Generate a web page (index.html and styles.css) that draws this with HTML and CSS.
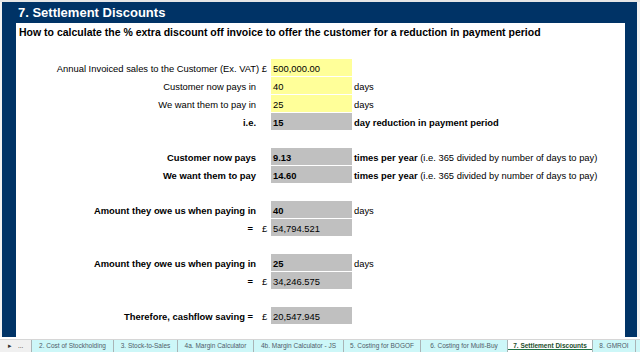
FILE: index.html
```html
<!DOCTYPE html>
<html lang="en">
<head>
  <meta charset="UTF-8" />
  <meta name="viewport" content="width=device-width, initial-scale=1.0" />
  <title>7. Settlement Discounts</title>
  <link rel="stylesheet" href="styles.css">
</head>
<body>
  <div class="gridline-top"></div>

  <div class="frame">
    <h1 class="sheet-title">7. Settlement Discounts</h1>
    <div class="sheet">
      <p class="intro">How to calculate the % extra discount off invoice to offer the customer for a reduction in payment period</p>
      <div class="row"></div>

      <div class="row">
        <span class="label wide">Annual Invoiced sales to the Customer (Ex. VAT) £</span>
        <span class="cell input">500,000.00</span>
      </div>
      <div class="row">
        <span class="label">Customer now pays in</span>
        <span class="cell input">40</span>
        <span class="unit">days</span>
      </div>
      <div class="row">
        <span class="label">We want them to pay in</span>
        <span class="cell input">25</span>
        <span class="unit">days</span>
      </div>
      <div class="row">
        <span class="label b">i.e.</span>
        <span class="cell calc b">15</span>
        <span class="unit b">day reduction in payment period</span>
      </div>
      <div class="row blank"></div>

      <div class="row">
        <span class="label b">Customer now pays</span>
        <span class="cell calc b">9.13</span>
        <span class="unit"><b>times per year</b> (i.e. 365 divided by number of days to pay)</span>
      </div>
      <div class="row">
        <span class="label b">We want them to pay</span>
        <span class="cell calc b">14.60</span>
        <span class="unit"><b>times per year</b> (i.e. 365 divided by number of days to pay)</span>
      </div>
      <div class="row blank"></div>

      <div class="row">
        <span class="label b">Amount they owe us when paying in</span>
        <span class="cell calc b">40</span>
        <span class="unit">days</span>
      </div>
      <div class="row">
        <span class="label b eq">=</span>
        <span class="cur">£</span>
        <span class="cell calc">54,794.521</span>
      </div>
      <div class="row blank"></div>

      <div class="row">
        <span class="label b">Amount they owe us when paying in</span>
        <span class="cell calc b">25</span>
        <span class="unit">days</span>
      </div>
      <div class="row">
        <span class="label b eq">=</span>
        <span class="cur">£</span>
        <span class="cell calc">34,246.575</span>
      </div>
      <div class="row blank"></div>

      <div class="row">
        <span class="label b eq">Therefore, cashflow saving =</span>
        <span class="cur">£</span>
        <span class="cell calc">20,547.945</span>
      </div>
    </div>
  </div>

  <div class="gridline-bottom"></div>

  <nav class="tabs">
    <div class="tab-nav"><span class="arrow">&#9656;</span><span>...</span></div>
    <div class="tab" style="width: 82px">2. Cost of Stockholding</div>
    <div class="tab" style="width: 64px">3. Stock-to-Sales</div>
    <div class="tab" style="width: 76px">4a. Margin Calculator</div>
    <div class="tab" style="width: 90px">4b. Margin Calculator - JS</div>
    <div class="tab" style="width: 77px">5. Costing for BOGOF</div>
    <div class="tab" style="width: 87px">6. Costing for Multi-Buy</div>
    <div class="tab active" style="width: 85px">7. Settlement Discounts</div>
    <div class="tab" style="width: 43px">8. GMROI</div>
    <div class="tab" style="width: 20px"></div>
  </nav>
</body>
</html>
```

FILE: styles.css
```css
* {
  box-sizing: border-box;
}
body {
  margin: 0;
  width: 640px;
  height: 352px;
  overflow: hidden;
  background: #f2f2f2;
  font-family: "Liberation Sans", Arial, sans-serif;
  color: #000;
}
.gridline-top {
  height: 2px;
  background: #e6e6e6;
}
.frame {
  height: 335px;
  margin: 0 3px 0 2px;
  padding: 0 12px 0 14px;
  background: #003366;
  display: flex;
  flex-direction: column;
}
.sheet-title {
  margin: 0;
  flex: none;
  height: 21px;
  line-height: 21px;
  padding-left: 2px;
  font-size: 13px;
  font-weight: bold;
  color: #fff;
}
.sheet {
  flex: 1;
  background: #fff;
  font-size: 9.4px;
}
.intro {
  margin: 0;
  height: 18px;
  line-height: 18px;
  padding-left: 3px;
  font-size: 10.5px;
  font-weight: bold;
  white-space: nowrap;
}
.row {
  display: grid;
  grid-template-columns: 242px 13px 81px 1fr;
  height: 18px;
  line-height: 19px;
  white-space: nowrap;
}
.row.blank {
  height: 17px;
}
.label {
  grid-column: 1;
  text-align: right;
  padding-right: 2px;
}
.label.wide {
  grid-column: 1 / span 2;
  padding-right: 4px;
}
.label.eq {
  padding-right: 5px;
}
.cur {
  grid-column: 2;
  text-align: center;
}
.cell {
  grid-column: 3;
  height: 18px;
  padding-left: 2px;
  border-bottom: 1px solid #fff;
}
.input {
  background: #ffff99;
}
.calc {
  background: #c0c0c0;
}
.unit {
  grid-column: 4;
  padding-left: 2px;
}
.b, .unit b {
  font-weight: bold;
}
.gridline-bottom {
  height: 2px;
  background: #fff;
}
.tabs {
  height: 13px;
  display: flex;
  background: #f0f0f0;
  border-top: 1px solid #d6d6d6;
  font-size: 6.5px;
  line-height: 12px;
  color: #4f5c68;
  white-space: nowrap;
  overflow: hidden;
}
.tab-nav {
  width: 31px;
  flex: none;
  display: flex;
  gap: 6px;
  padding-left: 8px;
  color: #333;
}
.arrow {
  font-size: 7px;
}
.tab {
  flex: none;
  background: #cdf7f8;
  border-left: 1px solid #a9b4b6;
  text-align: center;
  overflow: hidden;
}
.tab.active {
  background: #fff;
  color: #1d4d2c;
  font-weight: bold;
  box-shadow: inset 0 -2px 0 #fff, inset 0 -3px 0 #217346;
}
```
